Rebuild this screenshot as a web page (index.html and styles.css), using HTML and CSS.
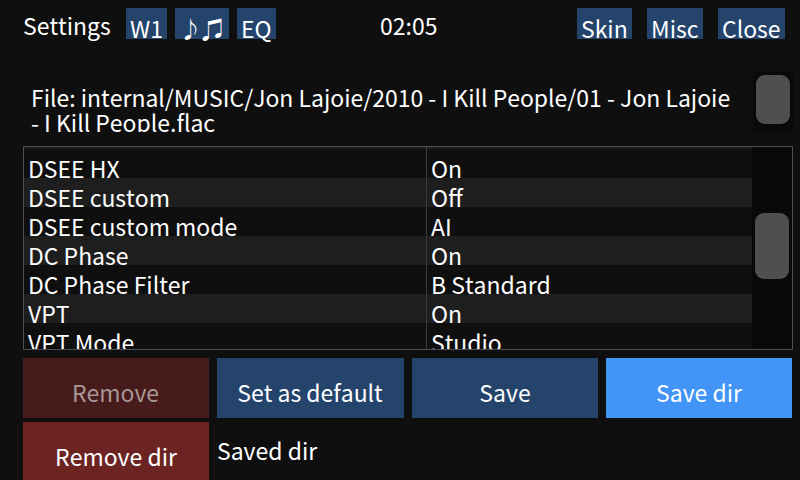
FILE: index.html
```html
<!DOCTYPE html>
<html lang="ja">
<head>
<meta charset="utf-8">
<title>Settings</title>
<link rel="stylesheet" href="styles.css">
</head>
<body>
<main class="window">
  <header class="toolbar">
    <span class="title">Settings</span>
    <button class="tab tab-w1">W1</button>
    <button class="tab tab-notes">♪♫</button>
    <button class="tab tab-eq">EQ</button>
    <span class="clock">02:05</span>
    <button class="tab tab-skin">Skin</button>
    <button class="tab tab-misc">Misc</button>
    <button class="tab tab-close">Close</button>
  </header>
  <section class="file">
    <p class="path">File: internal/MUSIC/Jon Lajoie/2010 - I Kill People/01 - Jon Lajoie<br>- I Kill People.flac</p>
    <div class="track"><div class="thumb thumb-file"></div></div>
  </section>
  <section class="settings">
    <div class="rows">
      <div class="row sliver"><span></span><span></span></div>
      <div class="row"><span>DSEE HX</span><span>On</span></div>
      <div class="row alt"><span>DSEE custom</span><span>Off</span></div>
      <div class="row"><span>DSEE custom mode</span><span>AI</span></div>
      <div class="row alt"><span>DC Phase</span><span>On</span></div>
      <div class="row"><span>DC Phase Filter</span><span>B Standard</span></div>
      <div class="row alt"><span>VPT</span><span>On</span></div>
      <div class="row"><span>VPT Mode</span><span>Studio</span></div>
    </div>
    <div class="track"><div class="thumb thumb-list"></div></div>
  </section>
  <section class="actions">
    <button class="action disabled">Remove</button>
    <button class="action default">Set as default</button>
    <button class="action">Save</button>
    <button class="action active">Save dir</button>
    <button class="action danger">Remove dir</button>
    <span class="status">Saved dir</span>
  </section>
</main>
</body>
</html>
```
FILE: styles.css
```css
* { box-sizing: border-box; }
body {
  margin: 0;
  width: 800px;
  height: 480px;
  overflow: hidden;
  background: #0f0f0f;
  color: #fff;
  font: 22.98px/25px "Noto Sans CJK JP", sans-serif;
  font-kerning: none;
  white-space: nowrap;
}
button {
  border: 0;
  padding: 0;
  color: inherit;
  font: inherit;
  font-kerning: none;
  background: #24446c;
}
.window { height: 480px; padding: 8px 7px 0 23px; overflow: hidden; }
.toolbar { display: flex; height: 31px; }
.title { width: 103px; padding-top: 5px; }
.tab { height: 31px; padding: 8px 0 0 4px; line-height: 25px; text-align: left; }
.tab-w1 { width: 41px; }
.tab-notes { width: 54px; margin-left: 8px; }
.tab-eq { width: 39px; margin-left: 8px; }
.clock { width: 197px; margin-left: 104px; padding-top: 5px; }
.tab-skin { width: 55px; }
.tab-misc { width: 56px; margin-left: 15px; }
.tab-close { width: 67px; margin-left: 15px; }
.file { display: flex; height: 60px; margin-top: 33px; }
.path { width: 730px; height: 60px; margin: 0; padding: 13px 0 0 8px; overflow: hidden; }
.track { width: 40px; background: #090909; }
.thumb { width: 34px; margin-left: 3px; border-radius: 9px; background: #4f4f4f; }
.thumb-file { height: 49px; margin-top: 3px; }
.settings {
  display: flex;
  width: 770px;
  height: 204px;
  margin-top: 14px;
  border: 1px solid #4f4f59;
  overflow: hidden;
}
.rows { width: 728px; }
.row { display: grid; grid-template-columns: 402px 326px; height: 29px; }
.row span { height: 29px; padding: 7px 0 0 4px; }
.row span + span { border-left: 1px solid #3b3b40; }
.alt, .sliver { background: #1e1e1e; }
.sliver, .row.sliver span { height: 2px; padding: 0; }
.thumb-list { height: 66px; margin-top: 66px; }
.actions {
  display: grid;
  grid-template-columns: 186px 187px 186px 186px;
  grid-auto-rows: 60px;
  gap: 4px 8px;
  margin-top: 8px;
}
.action { padding-top: 8px; text-align: center; }
.disabled, .default { padding-right: 1px; }
.disabled { background: #471b1b; color: #a99797; }
.active { background: #4294f7; }
.danger { background: #6c2423; }
.status { padding-top: 16px; }
```
